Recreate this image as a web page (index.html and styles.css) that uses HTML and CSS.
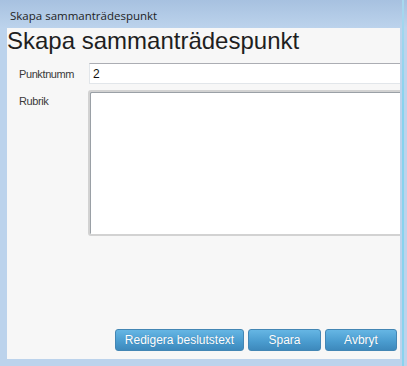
FILE: index.html
```html
<!DOCTYPE html>
<html lang="sv">
<head>
    <meta charset="UTF-8">
    <title>Skapa sammanträdespunkt</title>
    <link rel="stylesheet" href="styles.css">
</head>
<body>
<div class="window">
    <div class="titlebar">Skapa sammanträdespunkt</div>
    <div class="client">
        <h1 class="heading">Skapa sammanträdespunkt</h1>
        <form class="form">
            <div class="row">
                <label for="punkt">Punktnumm</label>
                <input type="text" id="punkt" value="2">
            </div>
            <div class="row">
                <label for="rubrik">Rubrik</label>
                <textarea id="rubrik"></textarea>
            </div>
        </form>
        <div class="buttons">
            <button type="button" class="btn btn-wide">Redigera beslutstext</button>
            <button type="button" class="btn btn-save">Spara</button>
            <button type="button" class="btn btn-cancel">Avbryt</button>
        </div>
    </div>
    <div class="edge"></div>
</div>
</body>
</html>
```

FILE: styles.css
```css
body {
    margin: 0;
    padding: 0;
    background: #bcd3ec;
}
.window {
    position: relative;
    width: 407px;
    height: 366px;
    box-sizing: border-box;
    padding: 0 7px 7px 7px;
    background: linear-gradient(to bottom, #a7c1e0 0px, #bcd3ec 28px, #bcd3ec 100%);
    overflow: hidden;
}
.titlebar {
    height: 28px;
    box-sizing: border-box;
    padding: 9px 0 0 3px;
    font: 11.5px/14px 'Open Sans', 'Noto Sans', sans-serif;
    color: #1e1e1e;
}
.edge {
    position: absolute;
    top: 0;
    right: 3px;
    width: 2px;
    height: 100%;
    background: linear-gradient(to bottom, #a9d8ee, #86d3ee 30%, #8ad3ee);
}
.client {
    width: 393px;
    height: 331px;
    background: #f7f7f7;
    overflow: hidden;
    display: flex;
    flex-direction: column;
}
.heading {
    margin: 0;
    font: normal 24px/26px 'Liberation Sans', Arial, sans-serif;
    color: #1f1f1f;
    padding-left: 0;
}
.form {
    margin-top: 9px;
    display: flex;
    flex-direction: column;
    gap: 6px;
}
.row {
    display: flex;
    align-items: flex-start;
}
.row label {
    width: 70px;
    padding-left: 12px;
    padding-top: 4px;
    font: 11px/14px 'Liberation Sans', Arial, sans-serif;
    letter-spacing: -0.4px;
    color: #3a3a3a;
    flex-shrink: 0;
}
.row input {
    width: 330px;
    height: 21px;
    box-sizing: border-box;
    margin: 0;
    padding: 1px 3px 0 3px;
    border: 1px solid #e2e6ea;
    border-top-color: #abadb3;
    background: #fff;
    font: 12px 'Liberation Sans', Arial, sans-serif;
    color: #111;
    flex-shrink: 0;
}
.row textarea {
    width: 330px;
    height: 146px;
    box-sizing: border-box;
    margin: 0 0 0 -1px;
    border: 2px solid #d2d2d2;
    border-radius: 3px;
    box-shadow: inset 1px 1px 0 #9aa0a6;
    background: #fff;
    resize: none;
    flex-shrink: 0;
}
.buttons {
    margin-top: auto;
    margin-bottom: 8px;
    display: flex;
    justify-content: flex-end;
    gap: 4px;
    padding-right: 3px;
}
.btn {
    height: 22px;
    box-sizing: border-box;
    border: 1px solid #4386b4;
    border-radius: 3px;
    background: linear-gradient(to bottom, #66b6e4, #4b9dd0 55%, #3d89bc);
    color: #fff;
    font: 12px 'Liberation Sans', Arial, sans-serif;
    text-shadow: 0 0 1px rgba(0, 40, 80, 0.3);
    padding: 0;
}
.btn-wide {
    width: 129px;
}
.btn-save {
    width: 73px;
}
.btn-cancel {
    width: 72px;
}
```
